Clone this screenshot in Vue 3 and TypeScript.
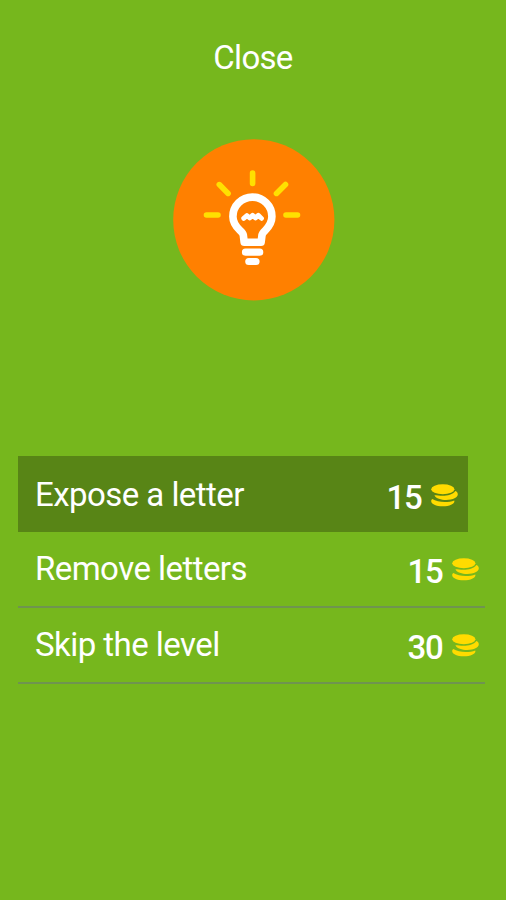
<script setup lang="ts">
interface Hint {
  label: string
  cost: number
  active: boolean
}

const hints: Hint[] = [
  { label: 'Expose a letter', cost: 15, active: true },
  { label: 'Remove letters', cost: 15, active: false },
  { label: 'Skip the level', cost: 30, active: false },
]
</script>

<template>
  <main class="screen">
    <button class="close" type="button">Close</button>

    <svg class="badge" viewBox="0 0 162 162" aria-hidden="true">
      <circle cx="80.8" cy="80.8" r="80.6" fill="#ff8000" />
      <g stroke="#ffe000" stroke-width="5.6" stroke-linecap="round">
        <path d="M79.600 34v10.500M46.300 45.600l8.800 8.800M112.500 45.400l-9 9M33.500 76h11.500M113 76h11.500" />
      </g>
      <g fill="none" stroke="#fff" stroke-linecap="round" stroke-linejoin="round">
        <path stroke-width="7.600" d="M71.200 103.200L70.300 96C69.500 91.500 59.900 89 59.900 77.600A19.500 19.500 0 0 1 98.900 77.600C98.900 89 89.800 91.500 89 96L88.100 103.200Z" />
        <path stroke-width="4.800" d="M70.700 79.400l3.200-2.800l2.800 2.400l2.900-2.700l2.900 2.700l2.800-2.700l3.200 3.100" />
        <path stroke-width="7.200" d="M72.500 113.200h14.200M75.800 122.500h7.200" />
      </g>
    </svg>

    <ul class="hints">
      <li v-for="hint in hints" :key="hint.label" class="hint" :class="{ active: hint.active }">
        <span class="label">{{ hint.label }}</span>
        <span class="cost">{{ hint.cost }}</span>
        <svg class="coins" viewBox="0 0 27 23" aria-hidden="true">
          <path d="M3.400 11.300C5 14.600 10 16 15.200 16C22 16 26.800 13.500 26.800 10.300C26.800 8.800 26 7.700 24.300 7C22 10.500 16.500 11.800 11.500 11.800C8.500 11.800 5.500 11.300 3.400 11.300Z" />
          <path d="M1.300 15C.5 15.500 .2 16.300 .2 17.200C.2 20 5 22.300 11.800 22.300S23.400 20 23.400 17.200L23.300 16.400C17.500 18.700 7 18.800 1.300 15Z" />
          <ellipse cx="11.800" cy="5.200" rx="11.600" ry="5" />
        </svg>
      </li>
    </ul>
  </main>
</template>

<style>
body {
  margin: 0;
  background: #76b71d;
}
</style>

<style scoped>
.screen {
  display: flex;
  flex-direction: column;
  align-items: center;
  box-sizing: border-box;
  height: 900px;
  padding-top: 38px;
  background: #76b71d;
  color: #fff;
  font-family: Roboto, "Liberation Sans", sans-serif;
}

.close {
  padding: 0;
  border: 0;
  background: none;
  color: inherit;
  font: 400 33px/40px Roboto, "Liberation Sans", sans-serif;
  letter-spacing: -0.7px;
}

.badge {
  width: 162px;
  height: 162px;
  margin: 61px 0 0 1px;
}

.hints {
  align-self: stretch;
  margin: 155px 21px 0 18px;
  padding: 0;
  list-style: none;
}

.hint {
  display: flex;
  align-items: flex-start;
  box-sizing: border-box;
  height: 76px;
  padding: 17px 6px 0 17px;
  border-bottom: 2px solid #6f9450;
}

.hint.active {
  margin-right: 17px;
  padding: 19px 10px 0 17px;
  border-bottom: 0;
  background: #588516;
}

.label {
  flex: 1;
  font-size: 33px;
  line-height: 40px;
  letter-spacing: -0.55px;
  white-space: nowrap;
}

.cost {
  margin-top: 3px;
  font-size: 33px;
  font-weight: 500;
  line-height: 40px;
  letter-spacing: -1.2px;
}

.coins {
  width: 27px;
  height: 23px;
  margin: 8.500px 0 0 9.500px;
  fill: #ffdb00;
}
</style>
